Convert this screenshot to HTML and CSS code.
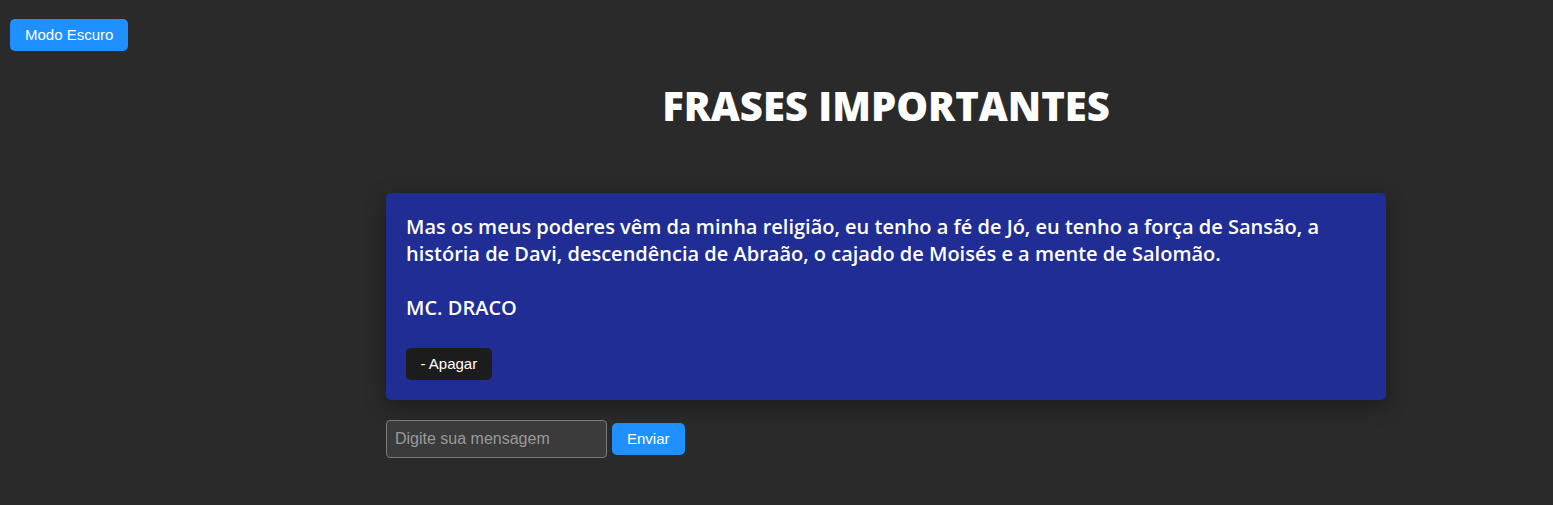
FILE: index.html
```html
<!DOCTYPE html>
<html lang="pt-BR">
<head>
<meta charset="utf-8">
<title>Frases Importantes</title>
<link rel="stylesheet" href="styles.css">
</head>
<body>
<header class="topbar">
  <button class="btn btn-blue">Modo Escuro</button>
</header>
<main class="main">
  <h1 class="title">FRASES IMPORTANTES</h1>
  <section class="card">
    <p class="quote">Mas os meus poderes vêm da minha religião, eu tenho a fé de Jó, eu tenho a força de Sansão, a história de Davi, descendência de Abraão, o cajado de Moisés e a mente de Salomão.</p>
    <p class="author">MC. DRACO</p>
    <button class="btn btn-dark">- Apagar</button>
  </section>
  <form class="composer" onsubmit="return false">
    <input class="field" type="text" placeholder="Digite sua mensagem">
    <button class="btn btn-blue" type="submit">Enviar</button>
  </form>
</main>
</body>
</html>
```

FILE: styles.css
```css
html, body {
  margin: 0;
  padding: 0;
}
body {
  background: #2a2a2a;
  color: #fff;
  font-family: "Open Sans", "Liberation Sans", sans-serif;
  min-height: 505px;
}
.topbar {
  padding: 19px 0 0 10px;
  display: flex;
}
.btn {
  font-family: "Liberation Sans", Arial, sans-serif;
  font-size: 15px;
  color: #fff;
  border: none;
  border-radius: 5px;
  height: 32px;
  padding: 0 15px;
  line-height: 32px;
  cursor: pointer;
}
.btn-blue {
  background: #1e90ff;
}
.btn-dark {
  background: #1c1c1c;
  padding: 0 14.5px;
}
.main {
  width: 1000px;
  margin-left: 386px;
}
.title {
  margin: 28px 0 0;
  text-align: center;
  font-size: 40px;
  font-weight: 800;
  line-height: 54px;
  letter-spacing: 0;
}
.card {
  margin-top: 60px;
  background: #1f2d94;
  border-radius: 5px;
  padding: 20px;
  box-shadow: 0 6px 20px rgba(0, 0, 0, 0.35);
}
.quote, .author {
  margin: 0;
  font-size: 20px;
  font-weight: 600;
  line-height: 27px;
}
.author {
  margin-top: 27px;
}
.card .btn-dark {
  margin-top: 27px;
  display: block;
}
.composer {
  margin-top: 20px;
  display: flex;
  align-items: center;
  gap: 5px;
}
.field {
  box-sizing: border-box;
  width: 221px;
  height: 38px;
  padding: 0 8px;
  background: #3b3b3b;
  border: 1px solid #7a7a7a;
  border-radius: 4px;
  color: #fff;
  font-family: "Liberation Sans", Arial, sans-serif;
  font-size: 16px;
  outline: none;
}
.field::placeholder {
  color: #9a9a9a;
}
```
